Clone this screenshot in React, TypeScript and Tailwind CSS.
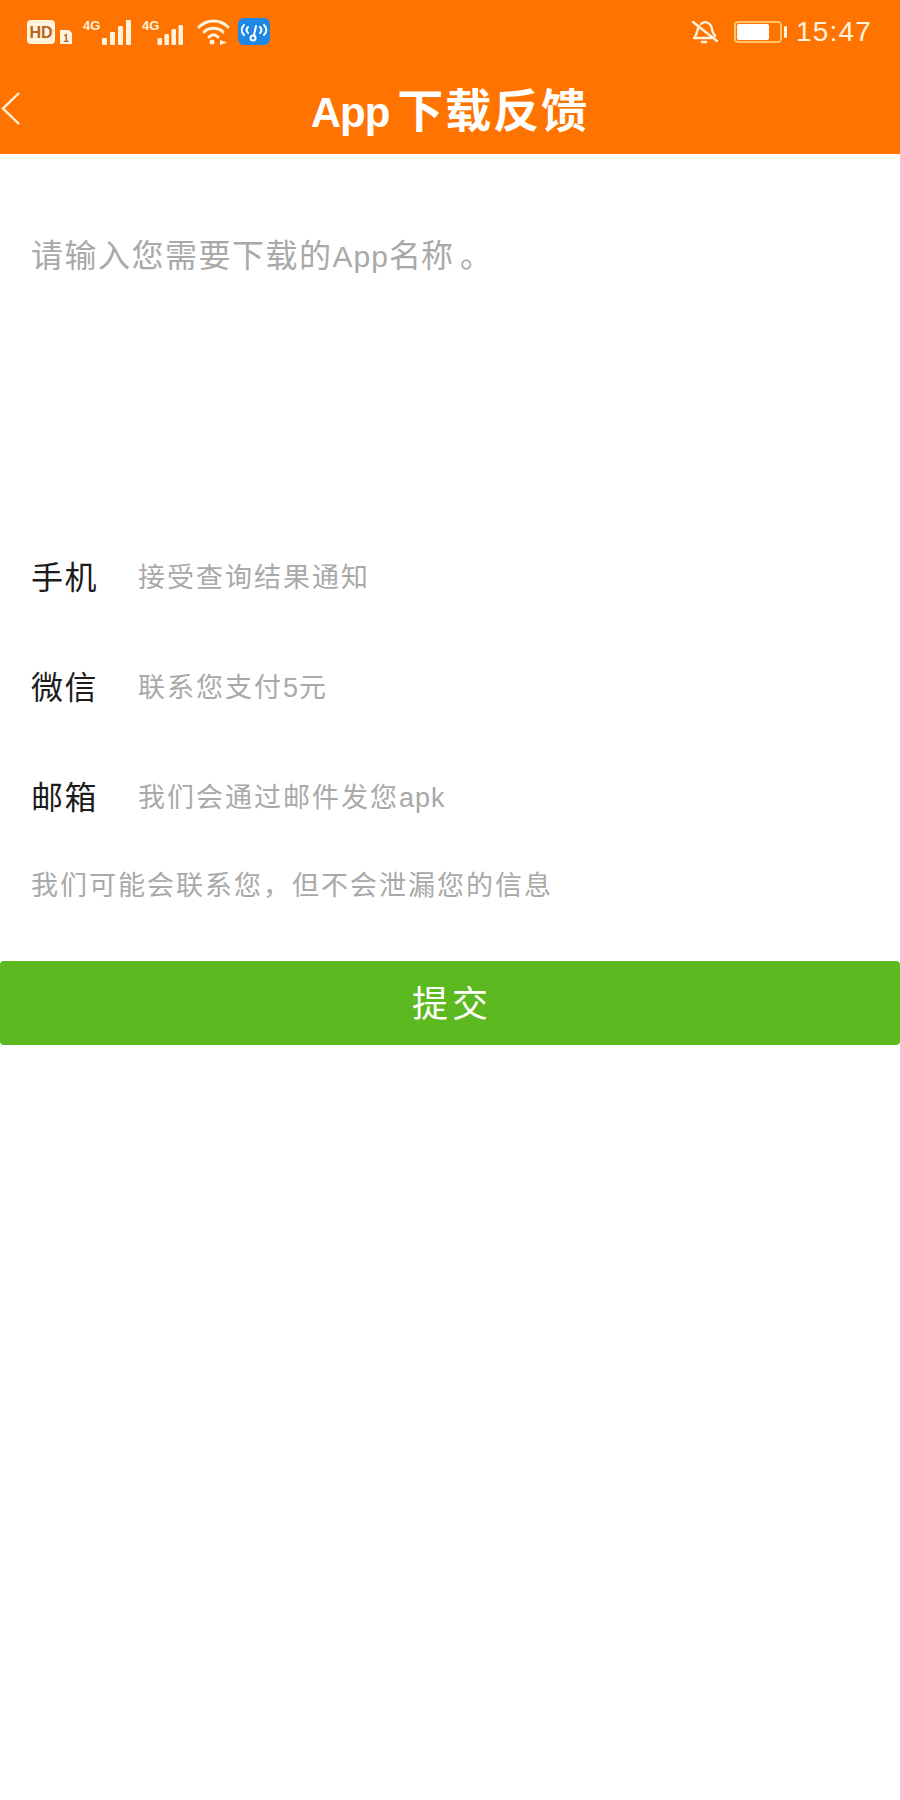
const cjk = "font-['Liberation_Sans','Noto_Sans_CJK_SC',sans-serif]";

function StatusBar() {
  return (
    <div className="flex h-[62px] items-center justify-between pl-[27px] pr-[28px] pt-[1px] text-[#fff3dc]">
      <div className="flex items-center">
        <svg width="46" height="26" viewBox="0 0 46 26">
          <rect x="0" y="1" width="28" height="24" rx="4" fill="#fff3dc" />
          <text x="14" y="19" textAnchor="middle" fontSize="16" fontWeight="700" fill="#b5651d" fontFamily="Liberation Sans">HD</text>
          <path d="M33 11h9l3 3v11H33z" fill="#fff3dc" />
          <text x="39" y="23" textAnchor="middle" fontSize="10" fontWeight="700" fill="#b5651d" fontFamily="Liberation Sans">1</text>
        </svg>
        <Signal className="ml-[10px]" bars={[7, 13, 19, 25]} w={48} step={8} bw={5} />
        <Signal className="ml-[11px]" bars={[7, 11, 16, 20]} w={41} step={7} bw={4.5} />
        <svg className="ml-[14px]" width="33" height="26" viewBox="0 0 33 26" fill="none" stroke="#fff3dc" strokeWidth="3" strokeLinecap="round">
          <path d="M2 8C10 0 23 0 31 8" />
          <path d="M7 13C12 8 21 8 26 13" />
          <path d="M12 18C15 15 18 15 21 18" />
          <circle cx="15" cy="23" r="2.5" fill="#fff3dc" stroke="none" />
          <path d="M23 21l7 2.5-7 2.5z" fill="#fff3dc" stroke="none" />
        </svg>
        <svg className="ml-[8px]" width="32" height="27" viewBox="0 0 32 27" fill="none">
          <rect x="0" y="0" width="32" height="27" rx="6" fill="#1e88e5" />
          <g stroke="#ffffff" strokeWidth="2" strokeLinecap="round">
            <path d="M6 7C3 10 3 14 6 17" />
            <path d="M26 7C29 10 29 14 26 17" />
            <path d="M10 9C8 11 8 13 10 15" />
            <path d="M22 9C24 11 24 13 22 15" />
            <path d="M18 8l-2 9" />
            <circle cx="15" cy="20" r="2.5" />
          </g>
        </svg>
      </div>
      <div className="flex items-center">
        <svg width="29" height="26" viewBox="0 0 29 26" fill="none" stroke="#fff3dc" strokeWidth="2.4" strokeLinecap="round" strokeLinejoin="round">
          <path d="M9 7C7 10 8 15 4 19H21" />
          <path d="M11 5C15 1 21 4 22 10C22 12 23 14 25 17" />
          <path d="M12 23h4" />
          <path d="M3 3L27 22" />
        </svg>
        <div className="ml-[15px] h-[22px] w-[48px] rounded-[4px] border-2 border-[#ffc46e] p-[1px]">
          <div className="h-full w-[32px] rounded-[2px] bg-white" />
        </div>
        <div className="ml-[2px] h-[12px] w-[3px] rounded-[1px] bg-[#fff3dc]" />
        <span className={`ml-[9px] text-[28px] leading-none tracking-[1.2px] ${cjk}`}>15:47</span>
      </div>
    </div>
  );
}

function Signal({ bars, w, step, bw, className }: { bars: number[]; w: number; step: number; bw: number; className?: string }) {
  return (
    <svg className={className} width={w} height="28" viewBox={`0 0 ${w} 28`} fill="#fff3dc">
      <text x="0" y="12" fontSize="13" fontWeight="700" fontFamily="Liberation Sans">4G</text>
      {bars.map((h, i) => (
        <rect key={i} x={w - 3 * step - bw + i * step} y={27 - h} width={bw} height={h} rx="1" />
      ))}
    </svg>
  );
}

function Row({ label, hint, latin }: { label: string; hint: string; latin?: string }) {
  return (
    <div className="flex h-[110px] items-center pl-[31px]">
      <span className="w-[107px] text-[32px] tracking-[1.5px] text-[#1c1c1c]">{label}</span>
      <span className="text-[27px] tracking-[2px] text-[#a9a9a9]">
        {hint}
        {latin && <span className="tracking-[1px]">{latin}</span>}
      </span>
    </div>
  );
}

export default function App() {
  return (
    <div className={`min-h-[1800px] bg-white ${cjk}`}>
      <div className="h-[154px] bg-[#ff7300]">
        <StatusBar />
        <div className="relative flex h-[92px] items-center justify-center pt-[6px]">
          <svg className="absolute left-0 top-[29px]" width="22" height="36" viewBox="0 0 22 36" fill="none" stroke="#fff3dc" strokeWidth="2.4">
            <path d="M19 2L3 17.5L19 33" />
          </svg>
          <span className="text-[46px] font-bold leading-none text-white">
            <span className="mr-[8px] text-[42px] tracking-[-1px]">App</span>
            <span className="tracking-[2px]">下载反馈</span>
          </span>
        </div>
      </div>
      <div className="h-[369px] pl-[31px] pt-[82px] text-[32px] leading-[40px] text-[#a9a9a9]">
        <span className="tracking-[1.5px]">请输入您需要下载的</span>
        <span className="text-[30px] tracking-[1px]">App</span>
        <span>名称</span>
        <span className="ml-[7px]">。</span>
      </div>
      <Row label="手机" hint="接受查询结果通知" />
      <Row label="微信" hint="联系您支付" latin="5元" />
      <Row label="邮箱" hint="我们会通过邮件发您" latin="apk" />
      <div className="pl-[31px] pt-[15px] text-[27px] leading-[36px] tracking-[2px] text-[#a9a9a9]">
        我们可能会联系您，但不会泄漏您的信息
      </div>
      <button className="mt-[57px] flex h-[84px] w-full items-center justify-center rounded-[4px] bg-[#5cb91f] pl-[4px] pt-[3px] text-[36px] tracking-[4px] text-white">
        提交
      </button>
    </div>
  );
}
